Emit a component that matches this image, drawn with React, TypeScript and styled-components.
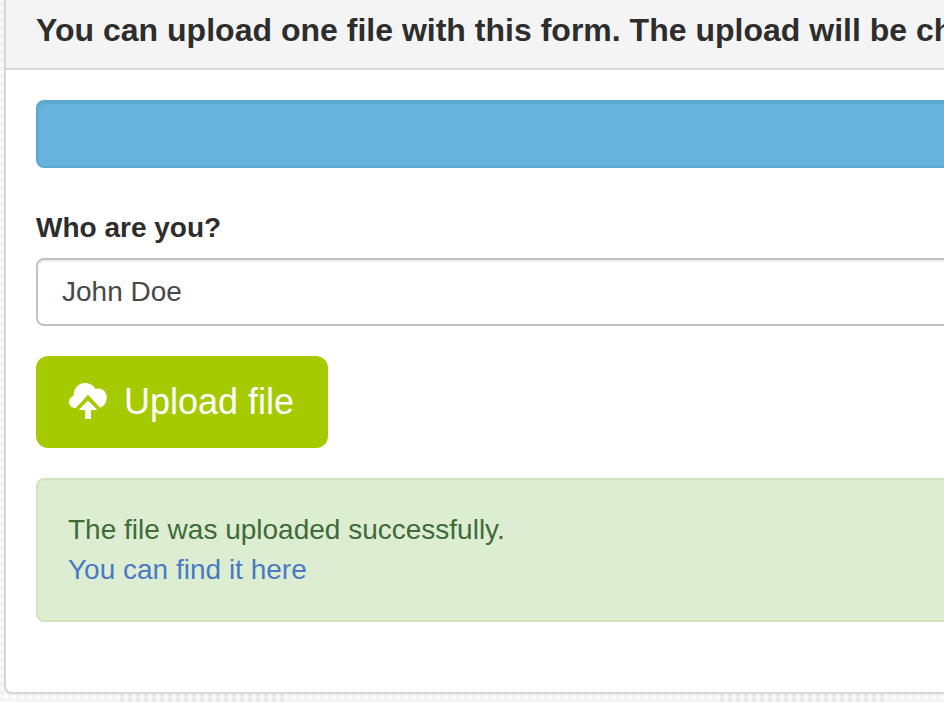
import React from "react";
import styled, { createGlobalStyle } from "styled-components";

const GlobalStyle = createGlobalStyle`
  * { box-sizing: border-box; }
  html, body { margin: 0; height: 702px; overflow: hidden; }
  body {
    font-family: "Liberation Sans", Arial, sans-serif;
    font-size: 28px;
    line-height: 40px;
    color: #2d2d2d;
  }
`;

const Page = styled.main`
  height: 702px;
  padding: 0 0 8px 4px;
  overflow: hidden;
  background:
    linear-gradient(90deg, rgba(0, 0, 0, 0.03), transparent 3px 5px, rgba(0, 0, 0, 0.03)) 2px 0 / 8px 8px,
    linear-gradient(180deg, rgba(0, 0, 0, 0.045), transparent 3px 5px, rgba(0, 0, 0, 0.045)) 0 4px / 8px 8px,
    linear-gradient(90deg, #fff 116px, transparent 116px 288px, #fff 288px) 0 0 / 600px 100%,
    linear-gradient(90deg, rgba(0, 0, 0, 0.05), transparent 3px 5px, rgba(0, 0, 0, 0.05)) 2px 0 / 8px 8px,
    #fff;
`;

const Panel = styled.section`
  width: 1200px;
  height: 694px;
  background: #fff;
  border: 2px solid #d7d7d7;
  border-top: 0;
  border-radius: 0 0 8px 8px;
  box-shadow: 0 2px 2px rgba(0, 0, 0, 0.05);
`;

const Heading = styled.h3`
  height: 70px;
  margin: 0;
  padding: 12px 0 0 30px;
  background: #f4f4f4;
  border-bottom: 2px solid #d7d7d7;
  font-size: 32px;
  line-height: 36px;
  letter-spacing: 0.01px;
  white-space: nowrap;
`;

const Form = styled.div`
  display: flex;
  flex-direction: column;
  align-items: flex-start;
  padding: 30px;
`;

const Progress = styled.div`
  width: 100%;
  height: 68px;
  margin-bottom: 40px;
  background: #66b4db;
  border: 2px solid #59aad0;
  border-radius: 8px;
  box-shadow: inset 0 2px 2px rgba(0, 0, 0, 0.075);
`;

const Label = styled.label`
  height: 40px;
  margin-bottom: 10px;
  font-weight: 700;
`;

const Input = styled.input`
  width: 100%;
  height: 68px;
  margin-bottom: 30px;
  padding: 0 24px;
  border: 2px solid #c2c2c2;
  border-radius: 8px;
  background: #fff;
  box-shadow: inset 0 2px 2px rgba(0, 0, 0, 0.075);
  color: #484848;
  font: inherit;
  outline: 0;
`;

const Button = styled.button`
  display: flex;
  align-items: center;
  width: 292px;
  height: 92px;
  margin-bottom: 30px;
  padding: 0 0 0 32px;
  gap: 16px;
  border: 0;
  border-radius: 12px;
  background: #a5ca00;
  color: #fff;
  font: 36px/48px "Liberation Sans", Arial, sans-serif;
  white-space: nowrap;
`;

const CloudIcon = styled.svg`
  width: 40px;
  height: 40px;
  flex: none;
  fill: currentColor;
`;

const Alert = styled.div`
  width: 100%;
  height: 144px;
  padding: 30px;
  background: #ddedd2;
  border: 2px solid #d0e4b9;
  border-radius: 8px;
  color: #3f6b39;
`;

const Message = styled.p`
  margin: 0;
`;

const Link = styled.a`
  color: #4a7ac4;
  text-decoration: none;
`;

export default function App() {
  return (
    <Page>
      <GlobalStyle />
      <Panel>
        <Heading>You can upload one file with this form. The upload will be ch</Heading>
        <Form>
          <Progress />
          <Label htmlFor="name">Who are you?</Label>
          <Input id="name" defaultValue="John Doe" />
          <Button type="button">
            <CloudIcon viewBox="0 0 40 40" aria-hidden="true">
              <path d="M7 26C3.6 26 1 23.2 1 19.8c0-2.8 1.9-5.1 4.6-5.7C5.2 7 10.2 1 17 1c4.7 0 8.8 2.6 10.6 6 .9-.3 1.8-.5 2.8-.5 4.8 0 8.4 4 8.4 8.8 0 4.8-2.8 9.4-6.6 10.4L20 12.8 8 25.8z" />
              <path d="M20 18.6l9.3 9.4H23v9h-6v-9h-6.3z" />
            </CloudIcon>
            Upload file
          </Button>
          <Alert>
            <Message>The file was uploaded successfully.</Message>
            <Link href="#">You can find it here</Link>
          </Alert>
        </Form>
      </Panel>
    </Page>
  );
}
